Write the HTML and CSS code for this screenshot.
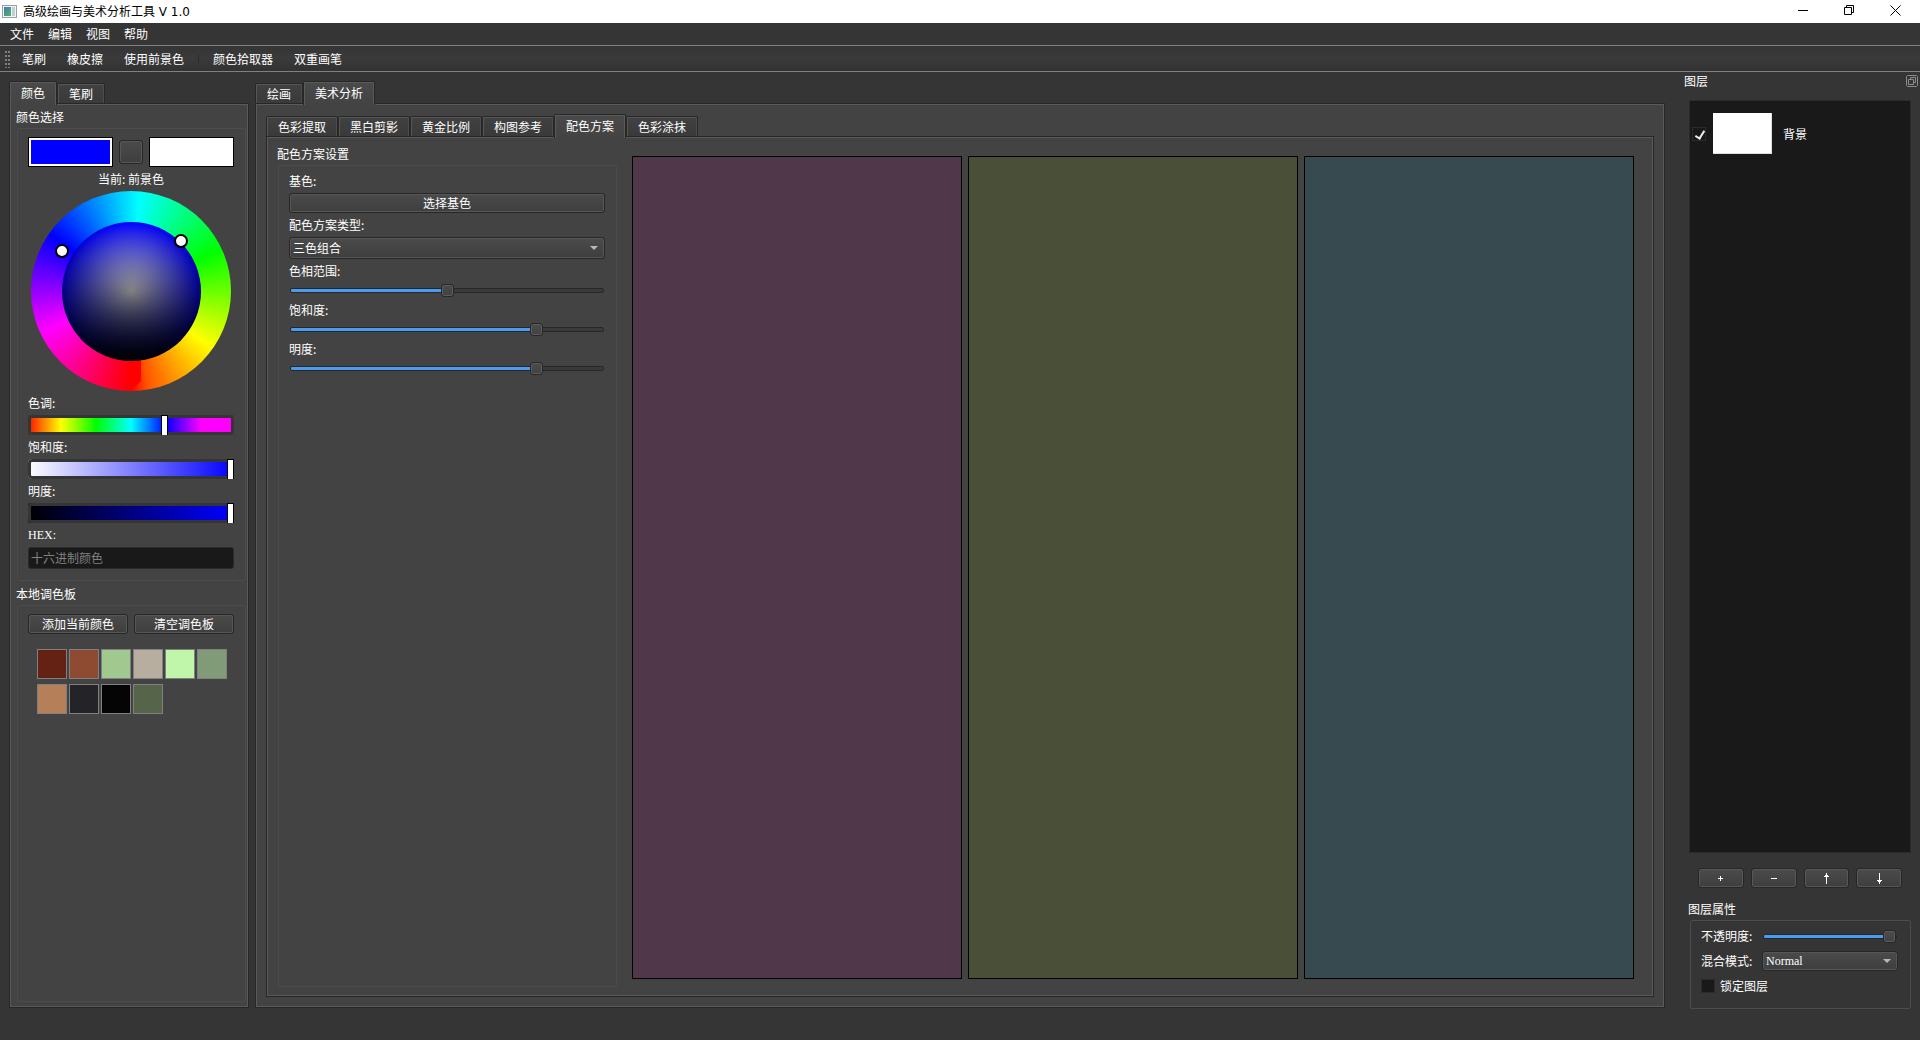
FILE: index.html
```
<!DOCTYPE html>
<html lang="zh-CN">
  <head>
    <meta charset="UTF-8" />
    <meta name="viewport" content="width=device-width, initial-scale=1.0" />
    <title>高级绘画与美术分析工具 V 1.0</title>
    <link rel="stylesheet" href="styles.css">
  </head>
  <body>
    <header class="titlebar">
      <svg class="app-icon" width="15" height="13" viewBox="0 0 15 13">
        <defs>
          <linearGradient id="appIcon" x1="0" y1="0" x2="1" y2="1">
            <stop offset="0" stop-color="#3b7fb0" />
            <stop offset="1" stop-color="#58b070" />
          </linearGradient>
        </defs>
        <rect x="0.5" y="0.5" width="14" height="12" fill="#f4f4f4" stroke="#9a9fa3" />
        <rect x="2" y="2" width="7" height="9" fill="url(#appIcon)" />
        <rect x="10" y="2" width="3" height="9" fill="#c3cfd6" />
      </svg>
      <span class="title">高级绘画与美术分析工具 V 1.0</span>
      <button class="win-button" aria-label="最小化">
        <svg width="11" height="11" viewBox="0 0 11 11"><path d="M0 5.5h10" /></svg>
      </button>
      <button class="win-button" aria-label="还原">
        <svg width="11" height="11" viewBox="0 0 11 11"><path d="M0.5 2.5h7v7h-7zM2.5 2.5v-2h7v7h-2" /></svg>
      </button>
      <button class="win-button" aria-label="关闭">
        <svg width="11" height="11" viewBox="0 0 11 11"><path d="M0.5 0.5l10 10M10.5 0.5l-10 10" /></svg>
      </button>
    </header>

    <nav class="menubar">
      <button>文件</button>
      <button>编辑</button>
      <button>视图</button>
      <button>帮助</button>
    </nav>

    <div class="toolbar">
      <span class="grip"></span>
      <button>笔刷</button>
      <button>橡皮擦</button>
      <button>使用前景色</button>
      <span class="separator"></span>
      <button>颜色拾取器</button>
      <button>双重画笔</button>
    </div>

    <main>
      <section class="tab-widget color-panel">
        <div class="tabs" role="tablist">
          <button class="tab active" role="tab">颜色</button>
          <button class="tab" role="tab">笔刷</button>
        </div>
        <div class="pane">
          <h2 class="group-title">颜色选择</h2>
          <div class="group">
            <div class="swatch-row">
              <button class="swatch foreground" aria-label="前景色"></button>
              <button class="push-button swap" aria-label="交换颜色"></button>
              <button class="swatch background" aria-label="背景色"></button>
            </div>
            <div class="current">当前: 前景色</div>
            <div class="wheel">
              <span class="wheel-seam"></span>
              <span class="wheel-inner"></span>
              <span class="wheel-handle hue-handle"></span>
              <span class="wheel-handle sv-handle"></span>
            </div>
            <label for="hue">色调:</label>
            <input class="gradient-slider hue" id="hue" type="range" min="0" max="359" value="240">
            <label for="sat">饱和度:</label>
            <input class="gradient-slider sat" id="sat" type="range" min="0" max="255" value="255">
            <label for="val">明度:</label>
            <input class="gradient-slider val" id="val" type="range" min="0" max="255" value="255">
            <label class="latin" for="hex">HEX:</label>
            <input class="line-edit" id="hex" type="text" placeholder="十六进制颜色">
          </div>
          <h2 class="group-title">本地调色板</h2>
          <div class="group palette">
            <div class="button-row">
              <button class="push-button">添加当前颜色</button>
              <button class="push-button">清空调色板</button>
            </div>
            <div class="palette-grid">
              <button class="chip chip-maroon" aria-label="#632214"></button>
              <button class="chip chip-rust" aria-label="#8f4b32"></button>
              <button class="chip chip-sage" aria-label="#a1c98f"></button>
              <button class="chip chip-stone" aria-label="#b7ae9f"></button>
              <button class="chip chip-mint" aria-label="#c0f6aa"></button>
              <button class="chip chip-moss" aria-label="#819a77"></button>
              <button class="chip chip-tan" aria-label="#b57f5a"></button>
              <button class="chip chip-ink" aria-label="#242428"></button>
              <button class="chip chip-black" aria-label="#050506"></button>
              <button class="chip chip-olive" aria-label="#566449"></button>
            </div>
          </div>
        </div>
      </section>

      <section class="tab-widget workspace">
        <div class="tabs" role="tablist">
          <button class="tab" role="tab">绘画</button>
          <button class="tab active" role="tab">美术分析</button>
        </div>
        <div class="pane">
          <div class="tab-widget">
            <div class="tabs" role="tablist">
              <button class="tab" role="tab">色彩提取</button>
              <button class="tab" role="tab">黑白剪影</button>
              <button class="tab" role="tab">黄金比例</button>
              <button class="tab" role="tab">构图参考</button>
              <button class="tab active" role="tab">配色方案</button>
              <button class="tab" role="tab">色彩涂抹</button>
            </div>
            <div class="pane scheme">
              <div class="scheme-settings">
                <h2 class="group-title">配色方案设置</h2>
                <div class="group">
                  <label for="base">基色:</label>
                  <button class="push-button" id="base">选择基色</button>
                  <label for="type">配色方案类型:</label>
                  <div class="combo">
                    <select id="type">
                      <option>三色组合</option>
                    </select>
                  </div>
                  <label for="range">色相范围:</label>
                  <input class="slider" id="range" type="range" value="50" style="--value: 50%">
                  <label for="scheme-sat">饱和度:</label>
                  <input class="slider" id="scheme-sat" type="range" value="80" style="--value: 80%">
                  <label for="scheme-val">明度:</label>
                  <input class="slider" id="scheme-val" type="range" value="80" style="--value: 80%">
                </div>
              </div>
              <div class="scheme-colors">
                <div class="color plum"></div>
                <div class="color olive"></div>
                <div class="color slate"></div>
              </div>
            </div>
          </div>
        </div>
      </section>

      <aside class="dock">
        <div class="dock-title">
          <span>图层</span>
          <button class="float-button" aria-label="浮动">
            <svg width="12" height="12" viewBox="0 0 12 12">
              <path d="M1.5 0.5h9l1 1v9l-1 1h-9l-1-1v-9zM2.5 4.5h5v5h-5zM4.5 4.5v-2h5v5h-2" />
            </svg>
          </button>
        </div>
        <div class="layer-list">
          <div class="layer">
            <input class="check" id="layer-bg" type="checkbox" checked>
            <span class="thumb"></span>
            <label for="layer-bg">背景</label>
          </div>
        </div>
        <div class="layer-buttons">
          <button class="push-button" aria-label="添加图层">
            <svg width="9" height="11" viewBox="0 0 9 11"><path d="M2 5.5h5M4.5 3v5" /></svg>
          </button>
          <button class="push-button" aria-label="删除图层">
            <svg width="9" height="11" viewBox="0 0 9 11"><path d="M2 5.5h6" /></svg>
          </button>
          <button class="push-button" aria-label="上移图层">
            <svg width="9" height="11" viewBox="0 0 9 11"><path d="M4.5 0v11M2 3.5h5M3 2.5h3" /></svg>
          </button>
          <button class="push-button" aria-label="下移图层">
            <svg width="9" height="11" viewBox="0 0 9 11"><path d="M4.5 0v11M2 7.5h5M3 8.5h3" /></svg>
          </button>
        </div>
        <h2 class="group-title">图层属性</h2>
        <div class="group layer-props">
          <div class="prop">
            <label for="opacity">不透明度:</label>
            <input class="slider" id="opacity" type="range" value="100" style="--value: 100%">
          </div>
          <div class="prop">
            <label for="blend">混合模式:</label>
            <div class="combo latin">
              <select id="blend">
                <option>Normal</option>
              </select>
            </div>
          </div>
          <div class="prop">
            <input class="check" id="lock" type="checkbox">
            <label for="lock">锁定图层</label>
          </div>
        </div>
      </aside>
    </main>
    <footer class="statusbar"></footer>
  </body>
</html>
```
FILE: styles.css
```
* {
  box-sizing: border-box;
}

body {
  display: flex;
  flex-direction: column;
  min-height: 100vh;
  margin: 0;
  background: #353535;
  color: #fff;
  font: 12px/16px "Noto Sans CJK SC", sans-serif;
}

button,
input,
select {
  margin: 0;
  padding: 0;
  border: none;
  border-radius: 0;
  background: none;
  color: inherit;
  font: inherit;
}

/* Title bar, menu and toolbar */

.titlebar {
  display: flex;
  align-items: center;
  height: 23px;
  padding: 0 2px;
  background: #fff;
  color: #000;
}

.title {
  flex: 1;
  margin-left: 6px;
  font-family: "DejaVu Sans", "Noto Sans CJK SC", sans-serif;
}

.win-button {
  display: flex;
  align-items: center;
  justify-content: center;
  width: 46px;
  height: 21px;
  align-self: flex-start;
}

.win-button svg {
  fill: none;
  stroke: #000;
}

.menubar {
  display: flex;
  height: 23px;
  padding: 0 3px;
  border-bottom: 1px solid #808080;
}

.menubar button {
  padding: 0 7px;
}

.toolbar {
  display: flex;
  align-items: center;
  gap: 1px;
  height: 26px;
  padding-left: 5px;
  border-bottom: 1px solid #808080;
  background: linear-gradient(#353535, #3a3a3a 50%, #323232);
}

.toolbar button {
  padding: 0 10px;
}

.grip {
  width: 6px;
  height: 18px;
  background: repeating-linear-gradient(#353535 0 1px, transparent 1px 3px, #353535 3px 4px),
    linear-gradient(90deg, #808080 2px, transparent 2px 3px, #808080 3px 5px, transparent 5px);
}

.separator {
  width: 1px;
  height: 8px;
  margin: 0 3px;
  background: #2a2a2a;
}

main {
  display: flex;
  flex: 1;
  padding-left: 9px;
}

.statusbar {
  height: 31px;
}

/* Tabs and panes */

.tab-widget {
  display: flex;
  flex: 1;
  flex-direction: column;
}

main > .tab-widget {
  padding: 9px 0 1px;
}

.color-panel {
  flex: 0 0 240px;
}

.workspace {
  min-width: 0;
  margin-left: 6px;
}

.tabs {
  display: flex;
  align-items: flex-end;
  height: 22px;
}

.tab {
  height: 20px;
  padding: 0 11px;
  border: 1px solid #272727;
  border-bottom: none;
  border-radius: 2px 2px 0 0;
  background: linear-gradient(#414141, #3a3a3a);
  box-shadow: inset 1px 1px #565656, inset -1px 0 #4c4c4c;
}

.tab.active {
  position: relative;
  height: 24px;
  margin-bottom: -2px;
  padding-bottom: 1px;
  background: linear-gradient(#4a4a4a, #434343);
  box-shadow: inset 1px 1px #5a5a5a, inset -1px 0 #5a5a5a;
}

.pane {
  display: flex;
  flex: 1;
  flex-direction: column;
  border: 1px solid #272727;
  background: #434343;
  box-shadow: inset 0 0 0 1px #5a5a5a;
}

.color-panel .pane {
  padding: 5px 2px 5px 7px;
}

.workspace > .pane {
  padding: 10px;
}

/* Group boxes and labels */

.group-title {
  margin: 0 0 3px -1px;
  font-size: 12px;
  font-weight: normal;
  line-height: 16px;
}

.group {
  display: flex;
  flex-direction: column;
  padding: 8px 11px 11px 10px;
  border: 1px solid #4c4c4c;
  border-radius: 2px;
}

.group + .group-title {
  margin-top: 5px;
}

.group > label {
  align-self: flex-start;
  margin: 4px 0;
}

.latin {
  font-family: "Liberation Serif", "Noto Sans CJK SC", serif;
}

/* Buttons, inputs and combo boxes */

.push-button {
  height: 20px;
  border: 1px solid #272727;
  border-radius: 3px;
  background: linear-gradient(#4b4b4b, #3e3e3e);
  box-shadow: inset 0 0 0 1px #575757;
}

.line-edit {
  height: 22px;
  padding: 0 2px 2px;
  border: 1px solid #2b2b2b;
  border-radius: 3px;
  background: #191919;
}

.line-edit::placeholder {
  color: #808080;
}

.combo {
  position: relative;
  flex: 1;
}

.combo::after {
  content: "";
  position: absolute;
  top: 50%;
  right: 7px;
  margin-top: -2px;
  border: 4px solid transparent;
  border-top-color: #b8b8b8;
  border-bottom: none;
  pointer-events: none;
}

.combo select {
  display: block;
  width: 100%;
  height: 22px;
  padding: 0 3px;
  border: 1px solid #272727;
  border-radius: 3px;
  background: linear-gradient(#4b4b4b, #3e3e3e);
  box-shadow: inset 0 0 0 1px #575757;
  appearance: none;
}

.check {
  width: 14px;
  height: 14px;
  border: 1px solid #2b2b2b;
  background: #191919;
  appearance: none;
}

.check:checked::after {
  content: "";
  display: block;
  width: 4px;
  height: 8px;
  margin: 1px 0 0 4px;
  border: solid #eee;
  border-width: 0 2px 2px 0;
  transform: rotate(32deg);
}

/* Sliders */

.slider {
  width: 100%;
  min-width: 0;
  height: 15px;
  appearance: none;
}

.slider::-webkit-slider-runnable-track {
  height: 5px;
  margin: 0 1px;
  border: 1px solid #272727;
  border-radius: 2px;
  background: linear-gradient(90deg, #4a9cf0 var(--value), #3a3a3a var(--value));
}

.slider::-webkit-slider-thumb {
  width: 13px;
  height: 13px;
  margin-top: -5px;
  border: 1px solid #272727;
  border-radius: 3px;
  background: linear-gradient(#4b4b4b, #424242);
  box-shadow: inset 0 0 0 1px #5c5c5c;
  appearance: none;
}

.gradient-slider {
  height: 20px;
  background: #353535;
  appearance: none;
}

.gradient-slider::-webkit-slider-runnable-track {
  height: 20px;
  border-radius: 4px;
  box-shadow: inset 0 0 0 3px #353535;
}

.gradient-slider::-webkit-slider-thumb {
  width: 7px;
  height: 20px;
  border: 1px solid #000;
  border-bottom: none;
  background: #fff;
  appearance: none;
}

.hue::-webkit-slider-runnable-track {
  background: linear-gradient(90deg, #ff1000, #ff0 16%, #0f0 33%, #0ff 50%, #00f 67%, #f0f 84%);
}

.sat::-webkit-slider-runnable-track {
  background: linear-gradient(90deg, #fff, #00f);
}

.val::-webkit-slider-runnable-track {
  background: linear-gradient(90deg, #000, #00f);
}

/* Color picker */

.swatch-row {
  display: flex;
  align-items: center;
  gap: 6px;
}

.swatch {
  flex: 1;
  height: 30px;
  border: 1px solid #000;
  background: #fff;
}

.foreground {
  background: #00f;
  box-shadow: inset 0 0 0 2px #fff;
}

.swap {
  width: 24px;
  height: 24px;
}

.current {
  margin: 4px 0;
  text-align: center;
}

.wheel {
  position: relative;
  align-self: center;
  width: 200px;
  height: 200px;
  border-radius: 50%;
  background: conic-gradient(from 5deg, #0ff, #0f0 60deg, #ff0 120deg, #f50 165deg, #f00 175deg, #f0f 240deg, #00f 300deg, #0ff);
}

.wheel-seam {
  position: absolute;
  bottom: 0;
  left: 50%;
  width: 10px;
  height: 30px;
  background: #f00;
  clip-path: polygon(0 0, 100% 0, 100% 66%, 0 100%);
}

.wheel-inner {
  position: absolute;
  inset: 31px 30px 30px 31px;
  border-radius: 50%;
  background: radial-gradient(closest-side, #fff, #00f), linear-gradient(#fff, #000);
  background-blend-mode: multiply;
}

.wheel-handle {
  position: absolute;
  width: 14px;
  height: 14px;
  border: 2px solid #000;
  border-radius: 50%;
  background: #fff;
}

.hue-handle {
  top: 53px;
  left: 24px;
}

.sv-handle {
  top: 43px;
  left: 143px;
}

/* Local palette */

.palette {
  flex: 1;
}

.button-row {
  display: flex;
  gap: 6px;
}

.button-row .push-button {
  flex: 1;
}

.palette-grid {
  display: grid;
  grid-template-columns: repeat(6, 30px);
  gap: 5px 2px;
  margin: 15px 0 0 9px;
}

.chip {
  height: 30px;
  border: 1px solid #808080;
}

.chip-maroon { background: #632214; }
.chip-rust { background: #8f4b32; }
.chip-sage { background: #a1c98f; }
.chip-stone { background: #b7ae9f; }
.chip-mint { background: #c0f6aa; }
.chip-moss { background: #819a77; }
.chip-tan { background: #b57f5a; }
.chip-ink { background: #242428; }
.chip-black { background: #050506; }
.chip-olive { background: #566449; }

/* Color scheme page */

.scheme {
  flex-direction: row;
  gap: 15px;
  padding: 9px 19px 9px 11px;
}

.scheme-settings {
  display: flex;
  flex: 0 0 339px;
  flex-direction: column;
}

.scheme-settings .group {
  flex: 1;
  padding-top: 3px;
}

.scheme-colors {
  display: flex;
  flex: 1;
  gap: 6px;
  padding: 10px 0 8px;
}

.scheme-settings .combo {
  flex: none;
}

.color {
  flex: 1;
  border: 1px solid #000;
}

.plum { background: #50374a; }
.olive { background: #4a4f37; }
.slate { background: #374a50; }

/* Layer dock */

.dock {
  display: flex;
  flex: 0 0 231px;
  flex-direction: column;
  margin-left: 24px;
  padding: 1px 9px 0 0;
}

.dock-title {
  display: flex;
  align-items: center;
  justify-content: space-between;
  margin: 0 -7px 11px -5px;
}

.float-button {
  height: 12px;
}

.float-button svg {
  display: block;
  fill: none;
  stroke: #8c8c8c;
}

.layer-list {
  flex: 1;
  padding: 12px 3px 12px 2px;
  border: 1px solid #2b2b2b;
  background: #191919;
}

.layer {
  display: flex;
  align-items: center;
}

.thumb {
  width: 59px;
  height: 41px;
  margin: 0 11px 0 7px;
  border: solid #ddd;
  border-width: 0 1px 1px 0;
  background: #fff;
}

.layer-buttons {
  display: flex;
  gap: 7px;
  margin: 15px 9px 13px;
}

.layer-buttons .push-button {
  display: flex;
  flex: 1;
  align-items: center;
  justify-content: center;
}

.layer-buttons svg {
  fill: none;
  stroke: #fff;
}

.layer-props {
  gap: 7px;
  margin-left: 1px;
  padding: 7px 12px 14px 10px;
}

.prop {
  display: flex;
  align-items: center;
}

.prop > label:first-child {
  width: 61px;
}

.prop .slider {
  flex: 1;
}

.prop .combo select {
  height: 20px;
}

.prop .check {
  margin-right: 5px;
}
```
